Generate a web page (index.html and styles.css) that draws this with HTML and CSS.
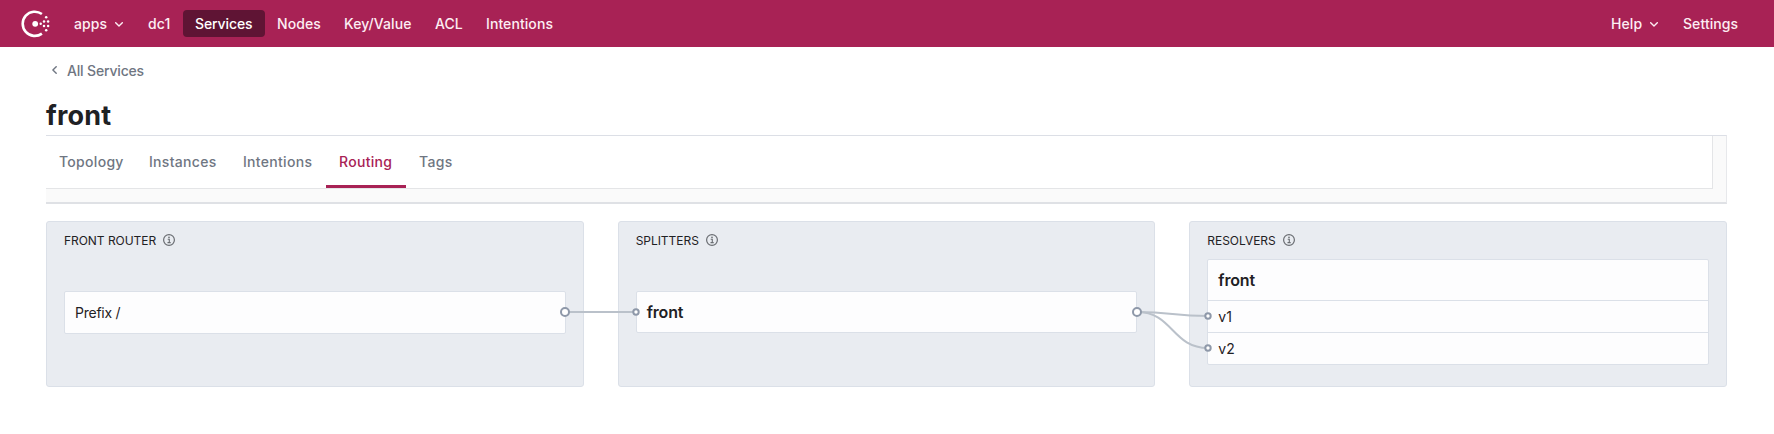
FILE: index.html
```html
<!DOCTYPE html>
<html lang="en">
<head>
<meta charset="utf-8">
<title>front - Consul</title>
<link rel="stylesheet" href="styles.css">
</head>
<body>
<svg width="0" height="0" class="defs">
  <symbol id="chevron" viewBox="0 0 8 5"><path d="M.7.7 4 4 7.3.7" fill="none" stroke="currentColor" stroke-width="1.4" stroke-linecap="round" stroke-linejoin="round"/></symbol>
  <symbol id="info" viewBox="0 0 12 12"><circle cx="6" cy="6" r="5.4" fill="none" stroke="currentColor" stroke-width="1.2"/><path d="M4.7 5.2h1.6v3.3M4.5 8.6h3.2" fill="none" stroke="currentColor" stroke-width="1.1"/><circle cx="6" cy="3.3" r=".85" fill="currentColor"/></symbol>
</svg>
<header class="topbar">
  <svg class="logo" viewBox="0 0 29 28">
    <path d="M20.9 4A12.1 12.1 0 1 0 20.9 23.6" fill="none" stroke="#fff" stroke-width="2.6"/>
    <g fill="#fff"><circle cx="14.2" cy="13.8" r="2.9"/><circle cx="19.7" cy="13.8" r="1.2"/><circle cx="23" cy="11.4" r="1.25"/><circle cx="23" cy="15.9" r="1.25"/><circle cx="27.1" cy="11.4" r="1.25"/><circle cx="27.1" cy="15.9" r="1.25"/><circle cx="25.2" cy="7.3" r="1.25"/><circle cx="25.2" cy="20.2" r="1.25"/></g>
  </svg>
  <nav class="nav">
    <a class="nav-item apps">apps<svg class="chev"><use href="#chevron"/></svg></a>
    <a class="nav-item dc">dc1</a>
    <a class="nav-item services">Services</a>
    <a class="nav-item nodes">Nodes</a>
    <a class="nav-item kv">Key/Value</a>
    <a class="nav-item acl">ACL</a>
    <a class="nav-item intentions">Intentions</a>
  </nav>
  <nav class="nav nav-right">
    <a class="nav-item help">Help<svg class="chev"><use href="#chevron"/></svg></a>
    <a class="nav-item settings">Settings</a>
  </nav>
</header>
<main class="content">
  <a class="back"><svg class="back-icon" viewBox="0 0 5 8"><path d="M4.2.7.9 4l3.3 3.3" fill="none" stroke="currentColor" stroke-width="1.4" stroke-linecap="round" stroke-linejoin="round"/></svg>All Services</a>
  <h1 class="title">front</h1>
  <div class="tabs-wrap">
    <nav class="tabs">
      <a class="tab tab-topology">Topology</a>
      <a class="tab tab-instances">Instances</a>
      <a class="tab tab-intentions">Intentions</a>
      <a class="tab tab-routing tab-active">Routing</a>
      <a class="tab">Tags</a>
    </nav>
  </div>
  <div class="chain">
    <section class="panel">
      <h2 class="panel-title">FRONT ROUTER<svg class="info"><use href="#info"/></svg></h2>
      <div class="panel-body"><div class="card card-route">Prefix /</div></div>
    </section>
    <section class="panel">
      <h2 class="panel-title">SPLITTERS<svg class="info"><use href="#info"/></svg></h2>
      <div class="panel-body"><div class="card card-name">front</div></div>
    </section>
    <section class="panel">
      <h2 class="panel-title">RESOLVERS<svg class="info"><use href="#info"/></svg></h2>
      <div class="panel-body"><div class="card">
        <div class="card-name">front</div>
        <div class="subset">v1</div>
        <div class="subset">v2</div>
      </div></div>
    </section>
    <svg class="edges" viewBox="0 0 1681 166">
      <g fill="none" stroke="#bac1ca" stroke-width="2">
        <path d="M519 91H590"/>
        <path d="M1091 91C1127 91 1126 95 1162 95"/>
        <path d="M1091 91C1127 91 1126 127 1162 127"/>
      </g>
      <g fill="#fff" stroke="#8e98a9" stroke-width="2">
        <circle cx="519" cy="91" r="4"/>
        <circle cx="590" cy="91" r="2.7"/>
        <circle cx="1091" cy="91" r="4"/>
        <circle cx="1162" cy="95" r="2.7"/>
        <circle cx="1162" cy="127" r="2.7"/>
      </g>
    </svg>
  </div>
</main>
</body>
</html>
```
FILE: styles.css
```css
* { box-sizing: border-box; }
body { margin: 0; background: #fff; color: #1f2124; font-family: Inter, "Liberation Sans", sans-serif; font-size: 14px; }
.defs { position: absolute; }
.topbar { display: flex; align-items: center; height: 47px; padding: 0 25px 0 21px; background: #a82255; color: #fdeef3; }
.logo { width: 29px; height: 28px; }
.nav { display: flex; align-items: center; margin-left: 14px; }
.nav-right { margin-left: auto; }
.nav-item { display: flex; align-items: center; height: 27px; padding: 0 10px; border-radius: 4px; font-weight: 500; line-height: 27px; letter-spacing: .08px; white-space: nowrap; }
.chev { width: 8px; height: 5px; margin: 2px 0 0 8px; }
.apps { width: 74px; }
.dc { width: 45px; }
.services { width: 82px; margin-right: 2px; padding-left: 12px; background: #5f1434; color: #fff; letter-spacing: -.1px; }
.nodes { width: 67px; }
.kv { width: 91px; }
.acl { width: 51px; }
.help { width: 72px; }
.settings { width: 76px; }
.content { padding: 0 47px 0 46px; }
.back { display: flex; align-items: center; height: 46px; padding-left: 6px; color: #6f7682; font-weight: 500; letter-spacing: -.17px; }
.back-icon { width: 5px; height: 8px; margin-right: 10px; }
.title { height: 42px; margin: 0; font-size: 27px; line-height: 45px; font-weight: 700; letter-spacing: .2px; }
.tabs-wrap { height: 69px; padding-right: 13px; background: #fafafa; border-top: 1px solid #dcdfe6; border-right: 1px solid #e7e8eb; border-bottom: 2px solid #dfe1e5; }
.tabs { display: flex; height: 53px; background: #fff; border-right: 1px solid #e4e5e7; border-bottom: 1px solid #e4e5e7; }
.tab { height: 52px; padding: 0 0 0 13px; color: #6f7682; font-weight: 500; line-height: 51px; letter-spacing: .3px; }
.tab-topology { width: 90px; }
.tab-instances { width: 94px; }
.tab-intentions { width: 96px; }
.tab-routing { width: 80px; }
.tab-active { color: #a82255; border-bottom: 3px solid #a82255; }
.chain { position: relative; display: grid; grid-template-columns: repeat(3, 1fr); gap: 34px; height: 166px; margin-top: 17px; }
.panel { display: flex; flex-direction: column; padding: 10px 17px 21px; background: #e9ecf1; border: 1px solid #dbe0e8; border-radius: 3px; }
.panel-title { display: flex; align-items: center; height: 16px; margin: 0 0 11px; font-size: 12px; font-weight: 400; letter-spacing: -.04px; }
.info { width: 12px; height: 12px; margin-left: 7px; color: #6a6d72; }
.panel-body { display: flex; flex-direction: column; flex: 1; justify-content: center; }
.card { background: #fdfdfe; border: 1px solid #dbe0e8; border-radius: 2px; }
.card-route { height: 43px; padding-left: 10px; line-height: 42px; letter-spacing: -.25px; }
.card-name { height: 40px; padding-left: 10px; font-size: 16px; font-weight: 600; line-height: 41px; letter-spacing: -.15px; }
.card.card-name { height: 42px; line-height: 40px; }
.subset { height: 32px; padding-left: 10px; border-top: 1px solid #dbe0e8; line-height: 32px; }
.edges { position: absolute; inset: 0; width: 1681px; height: 166px; }
```
